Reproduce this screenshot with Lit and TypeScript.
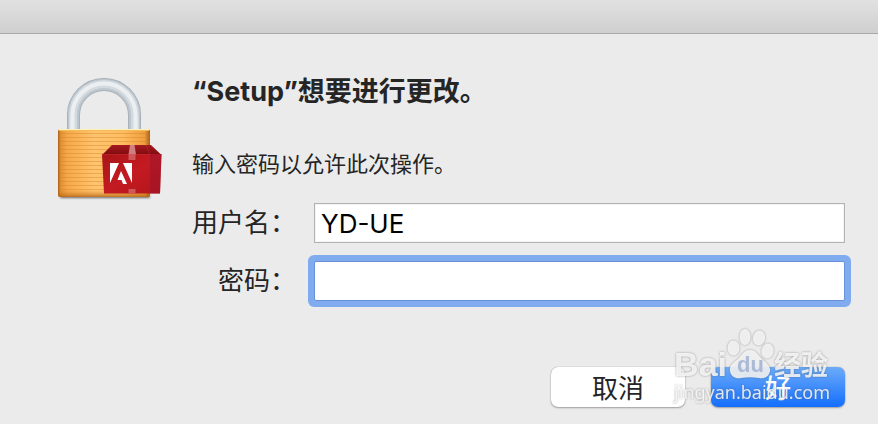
import { LitElement, html, css, svg } from "lit";
import { customElement, state } from "lit/decorators.js";

@customElement("lock-icon")
class LockIcon extends LitElement {
  static styles = css`
    :host { display: block; }
    .art { display: block; width: 112px; height: 128px; }
  `;

  render() {
    const ridges = Array.from({ length: 15 }, (_, i) => 58 + i * 4);
    return html`
      <svg class="art" viewBox="0 0 112 128" aria-hidden="true">
        <defs>
          <linearGradient id="body" x1="0" x2="1" y1="0" y2="0">
            <stop offset="0" stop-color="#a95f16" />
            <stop offset=".03" stop-color="#e09335" />
            <stop offset=".1" stop-color="#f5a94a" />
            <stop offset=".4" stop-color="#ffc46f" />
            <stop offset=".7" stop-color="#ffbd63" />
            <stop offset=".94" stop-color="#ee9f3e" />
            <stop offset="1" stop-color="#a85e18" />
          </linearGradient>
          <linearGradient id="foot" x1="0" x2="0" y1="0" y2="1">
            <stop offset="0" stop-color="#d77d1c" stop-opacity="0" />
            <stop offset="1" stop-color="#a85b10" stop-opacity=".75" />
          </linearGradient>
          <linearGradient id="front" x1="0" x2="1" y1="0" y2="1">
            <stop offset="0" stop-color="#a91419" />
            <stop offset=".5" stop-color="#c31b21" />
            <stop offset="1" stop-color="#b3151b" />
          </linearGradient>
          <linearGradient id="lid" x1="0" x2="0" y1="0" y2="1">
            <stop offset="0" stop-color="#a51a1f" />
            <stop offset="1" stop-color="#7e0b10" />
          </linearGradient>
          <filter id="soft" x="-10%" y="-200%" width="120%" height="500%">
            <feGaussianBlur stdDeviation="1" />
          </filter>
        </defs>
        <rect x="7" y="120" width="90" height="3" rx="1.5" fill="#333" opacity=".7" filter="url(#soft)" />
        <path d="M20.500 56V40a30.500 30.500 0 0 1 61 0V56" fill="none" stroke="#a3abb3" stroke-width="13" />
        <path d="M20.500 56V40a30.500 30.500 0 0 1 61 0V56" fill="none" stroke="#bdc6ce" stroke-width="11.500" />
        <path d="M20 56V40a31 31 0 0 1 62 0V56" fill="none" stroke="#d3dadf" stroke-width="8" />
        <path d="M19.500 56V40a31.500 31.500 0 0 1 63 0V56" fill="none" stroke="#eceff2" stroke-width="4" />
        <rect x="5" y="54" width="92" height="68" rx="2.500" fill="url(#body)" />
        ${ridges.map((y) => svg`<path d="M5.500 ${y}.500H96.500" stroke="#d97f20" stroke-opacity=".42" />`)}
        <rect x="5" y="115" width="92" height="7" rx="2.500" fill="url(#foot)" />
        <path d="M6 54.500H96" stroke="#fff0b5" />
        <path d="M6 55.500H96" stroke="#f4bb5c" />
        <path d="M59 70H98L108.500 80H49Z" fill="url(#lid)" />
        <path d="M49 79H108.500L107 118.500H51Z" fill="url(#front)" />
        <path d="M97 79H108.500L107 118.500H97Z" fill="#9c142b" opacity=".55" />
        <path d="M49 79.500H97L93 70" fill="none" stroke="#d0393d" stroke-opacity=".35" />
        <path d="M77 70H81.500L83 79.500H75.500Z" fill="#d99390" opacity=".85" />
        <path d="M75.500 79H82.500V85H75.500ZM75.500 114H82.500V118.500H75.500Z" fill="#d0575a" />
        <path d="M57 88H66L57 108ZM70 88H79V108ZM68 96L74 109H70L68.500 105H64.500Z" fill="#fff" />
      </svg>
    `;
  }
}

@customElement("site-watermark")
class SiteWatermark extends LitElement {
  static styles = css`
    :host {
      display: block;
      color: rgba(252, 252, 252, .85);
      filter: drop-shadow(0 0 1px rgba(80, 80, 80, .6));
      pointer-events: none;
    }
    .brand { display: flex; align-items: flex-end; height: 60px; }
    .word { font: bold 34px/34px "Liberation Sans", sans-serif; }
    .paw { position: relative; width: 47px; height: 60px; }
    .pads { display: block; width: 47px; height: 60px; }
    .du {
      position: absolute;
      inset: 30px 0 auto;
      text-align: center;
      font: bold 22px/28px "Liberation Sans", sans-serif;
      color: rgba(160, 178, 210, .85);
    }
    .cjk { font: bold 27px/34px "Noto Sans CJK SC", sans-serif; }
    .site { font: 18px/22px "Noto Sans", sans-serif; }
  `;

  render() {
    return html`
      <div class="brand">
        <span class="word">Bai</span>
        <span class="paw">
          <svg class="pads" viewBox="0 -5 47 60" aria-hidden="true">
            <g fill="currentColor">
              <ellipse cx="6.500" cy="22" rx="6" ry="7.500" />
              <ellipse cx="18" cy="11" rx="5.500" ry="8" />
              <ellipse cx="32" cy="12" rx="6" ry="7.500" transform="rotate(12 32 12)" />
              <ellipse cx="40.500" cy="25" rx="6" ry="7.500" transform="rotate(12 40.500 25)" />
              <path d="M23 24c-6 0-8 5-12 9-5 4-9 7-8 12 1 6 6 8 11 7 6-1 12-1 18 0 5 1 10-1 11-7 1-5-4-8-8-12-4-4-6-9-12-9Z" />
            </g>
          </svg>
          <span class="du">du</span>
        </span>
        <span class="cjk">经验</span>
      </div>
      <div class="site">jingyan.baidu.com</div>
    `;
  }
}

@customElement("app-root")
class AppRoot extends LitElement {
  @state() private user = "YD-UE";

  static styles = css`
    :host {
      display: block;
      position: relative;
      min-height: 100vh;
      box-sizing: border-box;
      overflow: hidden;
      background: #ebebeb;
      color: #252525;
      font-family: Inter, "Noto Sans CJK SC", sans-serif;
    }
    .titlebar {
      box-sizing: border-box;
      height: 34px;
      background: linear-gradient(#e1e1e1, #cfcfcf);
      border-bottom: 1px solid #a9a9a9;
    }
    .dialog {
      display: grid;
      grid-template-columns: 112px 1fr;
      column-gap: 27px;
      padding: 41px 33px 17px 53px;
    }
    .title { margin: 0; font-size: 27px; line-height: 34px; font-weight: 700; }
    .hint { margin: 39px 0 0; font-size: 22px; line-height: 32px; }
    .fields {
      display: grid;
      grid-template-columns: 104px 1fr;
      column-gap: 18px;
      row-gap: 18px;
      align-items: center;
      margin-top: 23px;
    }
    .label { font-size: 26px; line-height: 40px; text-align: right; white-space: nowrap; }
    .field {
      box-sizing: border-box;
      width: 100%;
      height: 40px;
      padding: 0 6px;
      border: 1px solid #b2b2b2;
      border-radius: 0;
      background: #fff;
      box-shadow: inset 0 0 0 1px #f4f4f4;
      color: #000;
      font: 26px/38px Inter, "Noto Sans CJK SC", sans-serif;
      outline: none;
    }
    .active { border-color: #6792d8; box-shadow: 0 0 0 6px #80acef; border-radius: 2px; }
    .actions { display: flex; justify-content: flex-end; gap: 26px; margin-top: 66px; }
    .button {
      width: 134px;
      height: 40px;
      padding: 0;
      border: 0;
      border-radius: 7px;
      background: #fff;
      box-shadow: 0 0 1px rgba(0, 0, 0, .4), 0 1px 2px rgba(0, 0, 0, .3);
      color: #252525;
      font: 26px/38px "Noto Sans CJK SC", sans-serif;
    }
    .primary {
      background: linear-gradient(#6cabf9, #146ffd);
      color: #fff;
      font-weight: 500;
    }
    .mark { position: absolute; right: 48px; bottom: 21px; }
  `;

  render() {
    return html`
      <header class="titlebar"></header>
      <form class="dialog" @submit=${(e: Event) => e.preventDefault()}>
        <lock-icon></lock-icon>
        <div>
          <h1 class="title">“Setup”想要进行更改。</h1>
          <p class="hint">输入密码以允许此次操作。</p>
          <div class="fields">
            <label class="label" for="user">用户名：</label>
            <input class="field" id="user" type="text" .value=${this.user}
              @input=${(e: Event) => (this.user = (e.target as HTMLInputElement).value)} />
            <label class="label" for="password">密码：</label>
            <input class="field active" id="password" type="password" />
          </div>
          <div class="actions">
            <button class="button" type="button">取消</button>
            <button class="button primary" type="submit">好</button>
          </div>
        </div>
      </form>
      <site-watermark class="mark"></site-watermark>
    `;
  }
}
